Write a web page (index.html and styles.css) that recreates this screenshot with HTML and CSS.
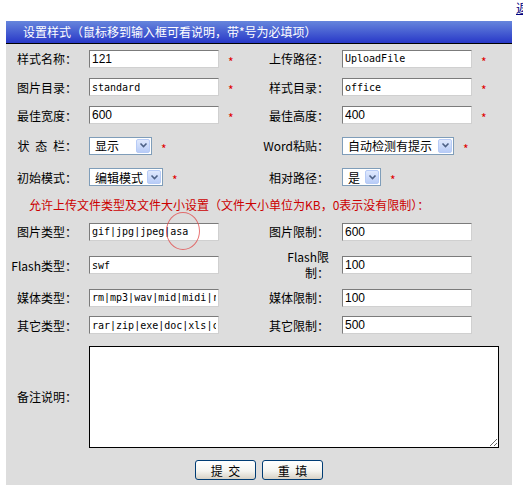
FILE: index.html
```html
<!DOCTYPE html>
<html lang="zh-CN">
<head>
    <meta charset="UTF-8">
    <title>设置样式</title>
    <link rel="stylesheet" href="styles.css">
</head>
<body>
    <div class="topbar"><a href="#" class="back">返回</a></div>

    <div class="panel">
        <div class="title">设置样式（鼠标移到输入框可看说明，带*号为必填项）</div>

        <form class="grid">
            <div class="lbl">样式名称：</div>
            <div class="fld"><input class="txt num" type="text" value="121"><span class="req">*</span></div>
            <div class="lbl lbl-r">上传路径：</div>
            <div class="fld"><input class="txt" type="text" value="UploadFile"><span class="req">*</span></div>

            <div class="lbl">图片目录：</div>
            <div class="fld"><input class="txt" type="text" value="standard"><span class="req">*</span></div>
            <div class="lbl lbl-r">样式目录：</div>
            <div class="fld"><input class="txt" type="text" value="office"><span class="req">*</span></div>

            <div class="lbl">最佳宽度：</div>
            <div class="fld"><input class="txt num" type="text" value="600"><span class="req">*</span></div>
            <div class="lbl lbl-r">最佳高度：</div>
            <div class="fld"><input class="txt num" type="text" value="400"><span class="req">*</span></div>

            <div class="lbl spaced">状 态 栏：</div>
            <div class="fld">
                <div class="combo combo-status"><span class="combo-text">显示</span><span class="combo-btn"><svg width="9" height="7" viewBox="0 0 9 7"><path d="M1.5 1.5 L4.5 4.5 L7.5 1.5" fill="none" stroke="#4d6185" stroke-width="1.6"/></svg></span></div>
                <span class="req">*</span>
            </div>
            <div class="lbl lbl-r">Word粘贴：</div>
            <div class="fld">
                <div class="combo combo-paste"><span class="combo-text">自动检测有提示</span><span class="combo-btn"><svg width="9" height="7" viewBox="0 0 9 7"><path d="M1.5 1.5 L4.5 4.5 L7.5 1.5" fill="none" stroke="#4d6185" stroke-width="1.6"/></svg></span></div>
                <span class="req">*</span>
            </div>

            <div class="lbl">初始模式：</div>
            <div class="fld">
                <div class="combo combo-mode"><span class="combo-text">编辑模式</span><span class="combo-btn"><svg width="9" height="7" viewBox="0 0 9 7"><path d="M1.5 1.5 L4.5 4.5 L7.5 1.5" fill="none" stroke="#4d6185" stroke-width="1.6"/></svg></span></div>
                <span class="req">*</span>
            </div>
            <div class="lbl lbl-r">相对路径：</div>
            <div class="fld">
                <div class="combo combo-rel"><span class="combo-text">是</span><span class="combo-btn"><svg width="9" height="7" viewBox="0 0 9 7"><path d="M1.5 1.5 L4.5 4.5 L7.5 1.5" fill="none" stroke="#4d6185" stroke-width="1.6"/></svg></span></div>
                <span class="req">*</span>
            </div>

            <div class="note">允许上传文件类型及文件大小设置（文件大小单位为KB，0表示没有限制）：</div>

            <div class="lbl">图片类型：</div>
            <div class="fld">
                <span class="mark"><input class="txt" type="text" value="gif|jpg|jpeg|asa"><span class="ring"></span></span>
            </div>
            <div class="lbl lbl-r">图片限制：</div>
            <div class="fld"><input class="txt num" type="text" value="600"></div>

            <div class="lbl">Flash类型：</div>
            <div class="fld"><input class="txt" type="text" value="swf"></div>
            <div class="lbl lbl-r two-line">Flash限<br>制：</div>
            <div class="fld"><input class="txt num" type="text" value="100"></div>

            <div class="lbl">媒体类型：</div>
            <div class="fld"><input class="txt" type="text" value="rm|mp3|wav|mid|midi|ram|wma|avi|mpg|mpeg|asf"></div>
            <div class="lbl lbl-r">媒体限制：</div>
            <div class="fld"><input class="txt num" type="text" value="100"></div>

            <div class="lbl">其它类型：</div>
            <div class="fld"><input class="txt" type="text" value="rar|zip|exe|doc|xls|chm|hlp"></div>
            <div class="lbl lbl-r">其它限制：</div>
            <div class="fld"><input class="txt num" type="text" value="500"></div>

            <div class="lbl">备注说明：</div>
            <div class="fld fld-memo"><textarea class="memo"></textarea></div>

            <div class="actions">
                <button type="submit" class="btn">提 交</button>
                <button type="reset" class="btn">重 填</button>
            </div>
        </form>
    </div>
</body>
</html>
```

FILE: styles.css
```css
body {
    margin: 0;
    padding: 0;
    font: 12px "Noto Sans CJK SC", sans-serif;
    color: #000;
    background-color: #fff;
}

.topbar {
    height: 21px;
    padding-left: 516px;
    box-sizing: border-box;
    line-height: 16px;
    white-space: nowrap;
    overflow: hidden;
}

.back {
    color: #000080;
    text-decoration: underline;
}

.panel {
    margin-left: 6px;
    width: 506px;
    background-color: #dddddd;
}

.title {
    height: 22px;
    line-height: 22px;
    padding-left: 17px;
    color: #fff;
    background: linear-gradient(#6686dc, #2838c8);
    border-bottom: 1px solid #000;
}

.grid {
    margin: 0;
    display: grid;
    grid-template-columns: 83px 171px 82px 170px;
    grid-template-rows: 29px 28px 28px 33px 30px 25px 29px 38px 27px 28px 115px 31px;
}

.lbl {
    display: flex;
    align-items: center;
    justify-content: flex-end;
    text-align: right;
    padding-right: 12px;
}

.lbl-r {
    padding-right: 13px;
}

.spaced {
    word-spacing: 3px;
}

.two-line {
    line-height: 16px;
}

.fld {
    display: flex;
    align-items: center;
    gap: 9px;
}

.txt {
    width: 130px;
    height: 18px;
    box-sizing: border-box;
    margin: 0;
    padding: 0 2px;
    border: 1px solid;
    border-color: #7b7b7b #d0d0d0 #d0d0d0 #7b7b7b;
    background-color: #fff;
    font: 10px "DejaVu Sans Mono", monospace;
    color: #000;
    outline: none;
}

.num {
    font: 12px "Liberation Sans", sans-serif;
}

.req {
    margin-top: 6px;
    line-height: 12px;
    color: #e00000;
}

.combo {
    display: flex;
    align-items: center;
    height: 18px;
    box-sizing: border-box;
    padding: 0 1px 0 5px;
    border: 1px solid #7f9db9;
    background-color: #fff;
}

.combo-text {
    flex: 1;
    white-space: nowrap;
}

.combo-btn {
    width: 14px;
    height: 14px;
    box-sizing: border-box;
    display: flex;
    align-items: center;
    justify-content: center;
    border: 1px solid #b7cbf6;
    border-radius: 2px;
    background: linear-gradient(#e0e9fd, #b8ccf7);
}

.combo-status { width: 63px; }
.combo-paste { width: 112px; }
.combo-mode { width: 74px; }
.combo-rel { width: 39px; }

.note {
    grid-column: 1 / -1;
    display: flex;
    align-items: center;
    padding-left: 23px;
    color: #cc0000;
}

.mark {
    position: relative;
    display: flex;
}

.ring {
    position: absolute;
    left: 77px;
    top: -11px;
    width: 32px;
    height: 36px;
    border: 1px solid rgba(225, 70, 70, 0.75);
    border-radius: 50%;
    pointer-events: none;
}

.fld-memo {
    grid-column: 2 / -1;
    align-items: flex-start;
    padding-top: 7px;
}

.memo {
    width: 410px;
    height: 102px;
    box-sizing: border-box;
    margin: 0;
    border: 1px solid #000;
    background-color: #fff;
}

.actions {
    grid-column: 1 / -1;
    display: flex;
    justify-content: center;
    align-items: flex-start;
    padding-top: 6px;
    gap: 6px;
}

.btn {
    width: 61px;
    height: 20px;
    padding: 0;
    border: 1px solid #003c74;
    border-radius: 3px;
    background: linear-gradient(#ffffff, #f4f4f0 55%, #d8d2c6);
    font: 12px "Noto Sans CJK SC", sans-serif;
    word-spacing: 3px;
    color: #000;
    cursor: pointer;
}
```
